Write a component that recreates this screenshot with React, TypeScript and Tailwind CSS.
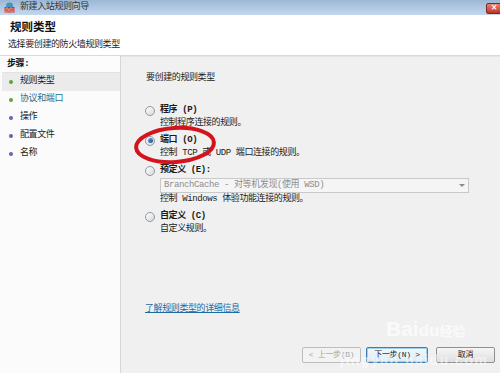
import React from "react";

const FONT = "font-['Liberation_Mono','Noto_Sans_CJK_SC',monospace]";

function Radio({ checked }: { checked?: boolean }) {
  return (
    <div className="mt-[1.5px] w-[10px] h-[10px] shrink-0 rounded-full border border-[#8e9aa6] bg-gradient-to-br from-[#ffffff] to-[#d8d8d8] flex items-center justify-center">
      {checked && <div className="w-[5px] h-[5px] rounded-full bg-gradient-to-br from-[#6fa4d8] to-[#1d4f8c]" />}
    </div>
  );
}

function Option({ label, desc, checked, children }: { label: string; desc: string; checked?: boolean; children?: React.ReactNode }) {
  return (
    <div className="flex gap-[5px]">
      <Radio checked={checked} />
      <div className="flex flex-col">
        <div className="h-[13px] leading-[13px] font-bold text-[#1a1a1a]">{label}</div>
        {children}
        <div className="h-[13px] leading-[13px] text-[#222]">{desc}</div>
      </div>
    </div>
  );
}

function Step({ text, color, active, teal }: { text: string; color: string; active?: boolean; teal?: boolean }) {
  return (
    <div className={`h-[18px] flex items-center gap-[7px] pl-[7px] ${active ? "bg-[#ebebeb]" : ""}`}>
      <div className="w-[4px] h-[4px] rounded-full" style={{ background: color }} />
      <span className={teal ? "text-[#2b6f8f]" : "text-[#222]"}>{text}</span>
    </div>
  );
}

function AppIcon() {
  return (
    <svg width="11" height="11" viewBox="0 0 11 11">
      <circle cx="5.5" cy="4" r="3.4" fill="#3b8ed0" />
      <path d="M3 3 q2 -2 4 0 q-1 2 -4 0z" fill="#4caf50" />
      <rect x="0.5" y="5" width="10" height="5.5" fill="#c8322a" />
      <path d="M0.5 7 h10 M0.5 9 h10 M3 5 v2 M7 5 v2 M5 7 v2 M2 9 v1.5 M8 9 v1.5" stroke="#f1d3c0" strokeWidth="0.6" />
    </svg>
  );
}

export default function App() {
  return (
    <div className={`relative w-[500px] h-[373px] overflow-hidden flex flex-col text-[9px] tracking-[-0.4px] ${FONT}`}>
      {/* title bar */}
      <div className="h-[15px] shrink-0 bg-gradient-to-b from-[#9cb7d5] to-[#c4d8ee] flex items-center pl-[4px] gap-[5px]">
        <AppIcon />
        <span className="text-[#333] text-[9px] leading-none">新建入站规则向导</span>
        <div className="ml-auto mr-[-2px] mt-[1px] w-[16px] h-[11px] rounded-[2px] border border-[#7a2a22] bg-gradient-to-b from-[#e8806c] to-[#c3321f] flex items-center justify-center text-white text-[8px] font-bold font-['DejaVu_Sans',sans-serif] leading-none">
          ×
        </div>
      </div>

      {/* header */}
      <div className="h-[41px] shrink-0 bg-white border-b border-[#d9d9d9] pl-[10px] pt-[5px]">
        <div className="text-[11.5px] font-bold text-[#111] leading-[16px] tracking-normal">规则类型</div>
        <div className="ml-[-2px] mt-[3px] leading-[12px] text-[#222]">选择要创建的防火墙规则类型</div>
      </div>

      <div className="flex-1 flex min-h-0">
        {/* steps */}
        <div className="w-[121px] shrink-0 bg-[#fbfbfb] border-r border-[#d6d6d6] pt-[1px] pl-[2px]">
          <div className="h-[16px] flex items-center pl-[5px] font-bold text-[#111] border-b border-[#e3e3e3] bg-[#fcfcfc]">步骤:</div>
          <Step text="规则类型" color="#5aa43e" active />
          <Step text="协议和端口" color="#5aa43e" teal />
          <Step text="操作" color="#6066a8" />
          <Step text="配置文件" color="#6066a8" />
          <Step text="名称" color="#6066a8" />
        </div>

        {/* content */}
        <div className="flex-1 bg-[#f0f0f0] border-t border-[#e4e4e4] flex flex-col pl-[24px] pr-[5px] pt-[15px] pb-[10px]">
          <div className="pl-[1px] h-[12px] leading-[12px] text-[#222]">要创建的规则类型</div>
          <div className="mt-[20px] flex flex-col gap-[4px]">
            <Option label="程序 (P)" desc="控制程序连接的规则。" />
            <Option label="端口 (O)" desc="控制 TCP 或 UDP 端口连接的规则。" checked />
            <Option label="预定义 (E):" desc="控制 Windows 体验功能连接的规则。">
              <div className="mt-[1px] w-[309px] h-[15px] border border-[#c9c9c9] bg-[#f5f5f5] flex items-center pl-[3px] text-[#8d8d8d]">
                <span>BranchCache - 对等机发现(使用 WSD)</span>
                <svg className="ml-auto mr-[3px]" width="6" height="4" viewBox="0 0 6 4"><path d="M0 0h6L3 3z" fill="#8a8a8a" /></svg>
              </div>
            </Option>
            <Option label="自定义 (C)" desc="自定义规则。" />
          </div>
          <div className="mt-auto h-[12px] leading-[12px] text-[#1f6a9e] underline underline-offset-1">了解规则类型的详细信息</div>
          <div className="mt-[32px] flex justify-end gap-[5px] text-[8px] tracking-[-0.3px]">
            <div className="w-[59px] h-[16px] rounded-[2px] border border-[#bdbdbd] bg-[#f3f3f3] text-[#a3a3a3] flex items-center justify-center whitespace-nowrap">&lt; 上一步(B)</div>
            <div className="w-[62px] h-[16px] rounded-[2px] border border-[#3d7fb4] bg-gradient-to-b from-[#f4f9fc] to-[#dbe9f3] text-[#1a1a1a] flex items-center justify-center whitespace-nowrap shadow-[inset_0_0_0_1px_#9fd0ef]">下一步(N) &gt;</div>
            <div className="ml-[3px] w-[59px] h-[16px] rounded-[2px] border border-[#8f8f8f] bg-gradient-to-b from-[#f6f6f6] to-[#dedede] text-[#1a1a1a] flex items-center justify-center">取消</div>
          </div>
        </div>
      </div>

      {/* red annotation circle */}
      <svg className="absolute left-[132px] top-[124px] pointer-events-none" width="86" height="42" viewBox="0 0 86 42">
        <ellipse cx="43" cy="21" rx="39" ry="17" transform="rotate(-4 43 21)" fill="none" stroke="#d2151c" strokeWidth="4" />
      </svg>

      {/* watermark */}
      <div className="absolute left-[386px] top-[318px] text-white/70 font-['Liberation_Sans',sans-serif] font-bold text-[21px] leading-none tracking-normal pointer-events-none">Bai<span className="text-[17px]">du</span><span className="text-[13px] font-['Noto_Sans_CJK_SC',sans-serif]">经验</span></div>
      <div className="absolute left-[340px] top-[353px] text-white/50 font-['Liberation_Sans',sans-serif] font-bold text-[14px] leading-none tracking-[1.5px] pointer-events-none">jingyan.baidu.com</div>
    </div>
  );
}
